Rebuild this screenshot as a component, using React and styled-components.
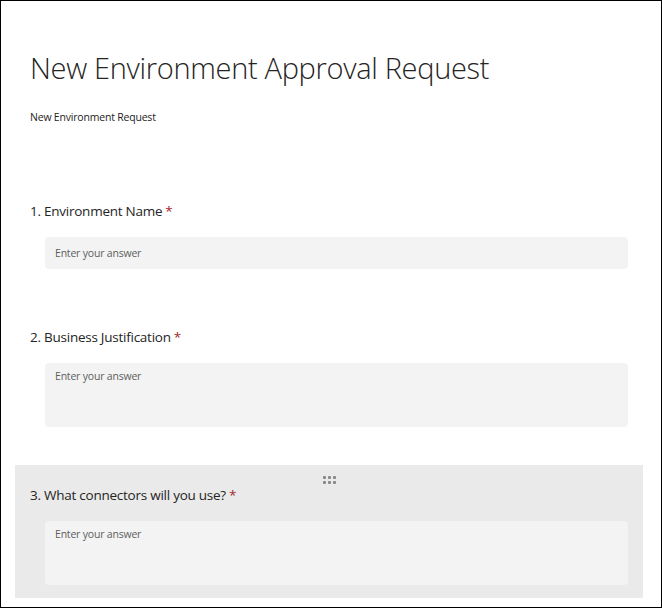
import React from "react";
import styled, { createGlobalStyle } from "styled-components";

const GlobalStyle = createGlobalStyle`
  html, body {
    margin: 0;
    padding: 0;
    background: #fff;
  }
  body {
    font-family: "Open Sans", "Noto Sans", sans-serif;
    color: #252423;
  }
`;

const questions = [
  { id: 1, label: "Environment Name", rows: 1 },
  { id: 2, label: "Business Justification", rows: 2 },
  { id: 3, label: "What connectors will you use?", rows: 2, active: true },
];

const Page = styled.div`
  box-sizing: border-box;
  width: 662px;
  height: 608px;
  border: 1px solid #000;
  overflow: hidden;
  display: flex;
  flex-direction: column;
`;

const Header = styled.div`
  padding: 47px 30px 0 29px;
  margin-bottom: 56px;
`;

const Title = styled.h1`
  margin: 0;
  font-size: 29px;
  line-height: 40px;
  font-weight: 300;
  letter-spacing: -0.32px;
  color: #252423;
`;

const Subtitle = styled.div`
  margin-top: 21px;
  font-size: 10.5px;
  line-height: 16px;
  letter-spacing: -0.2px;
  color: #252423;
`;

const Question = styled.div`
  position: relative;
  margin: 0 18px 25px 14px;
  padding: 20px 15px 13px 15px;
  background: ${(p) => (p.active ? "#eaeaea" : "transparent")};
`;

const Label = styled.div`
  font-size: 13.5px;
  line-height: 20px;
  letter-spacing: -0.25px;
  color: #252423;
`;

const Star = styled.span`
  color: #a4262c;
  margin-left: 3px;
`;

const Answer = styled.div`
  margin: 16px 0 0 15px;
  height: ${(p) => (p.rows > 1 ? 64 : 32)}px;
  box-sizing: border-box;
  padding: ${(p) => (p.rows > 1 ? "5px 10px" : "8px 10px")};
  background: #f3f3f3;
  border-radius: 4px;
  font-size: 10.5px;
  line-height: 16px;
  letter-spacing: -0.2px;
  color: #605e5c;
`;

const Handle = styled.div`
  position: absolute;
  top: 11px;
  left: 308px;
  display: grid;
  grid-template-columns: repeat(3, 3px);
  grid-gap: 2px 2px;
`;

const Dot = styled.span`
  width: 3px;
  height: 3px;
  border-radius: 1px;
  background: #8a8886;
`;

const App = () => {
  return (
    <Page>
      <GlobalStyle />
      <Header>
        <Title>New Environment Approval Request</Title>
        <Subtitle>New Environment Request</Subtitle>
      </Header>
      {questions.map((q) => (
        <Question key={q.id} active={q.active}>
          {q.active && (
            <Handle>
              {[0, 1, 2, 3, 4, 5].map((i) => (
                <Dot key={i} />
              ))}
            </Handle>
          )}
          <Label>
            {q.id}. {q.label}
            <Star>*</Star>
          </Label>
          <Answer rows={q.rows}>Enter your answer</Answer>
        </Question>
      ))}
    </Page>
  );
};

export default App;
